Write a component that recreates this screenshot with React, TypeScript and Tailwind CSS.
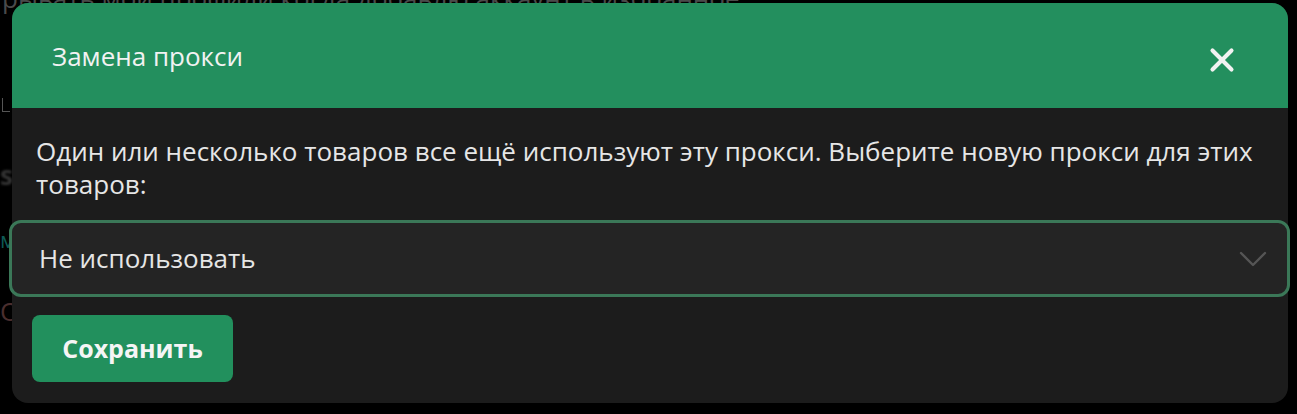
import { X } from 'lucide-react';

export default function App() {
  return (
    <div
      className="relative w-[1297px] h-[414px] overflow-hidden bg-black"
      style={{ fontFamily: '"Open Sans", "Noto Sans", sans-serif' }}
    >
      {/* страница под модалкой */}
      <div className="absolute inset-0 text-[#4a4a4a]">
        <p className="mt-[-15px] ml-[2px] text-[26px] leading-[26px] whitespace-nowrap">
          рывать мои профили когда добавлю аккаунт в избранное
        </p>
        <div className="mt-[87px] ml-[2px] w-[8px] h-[14px] border-l border-b border-[#555]" />
        <p className="mt-[44px] text-[26px] font-bold text-[#333] blur-[1px]">sc</p>
        <p className="mt-[28px] text-[22px] text-[#0e5a55]">м</p>
        <p className="mt-[36px] text-[26px] text-[#4a2e2e]">О</p>
      </div>

      {/* модалка */}
      <div className="absolute left-[12px] top-[3px] w-[1276px] h-[400px] rounded-[16px] bg-[#1c1c1c] flex flex-col">
        <div className="h-[105px] rounded-t-[16px] bg-[#238f5e] flex items-center justify-between pl-[40px] pr-[47px]">
          <h2 className="text-[26px] text-[#f2f2f2] mt-[2px]">Замена прокси</h2>
          <X className="w-[38px] h-[38px] text-[#f2f2f2] mt-[8px]" strokeWidth={2.6} />
        </div>

        <div className="flex flex-col px-[24px] pt-[27px] pb-[21px]">
          <p className="text-[26px] leading-[33px] text-[#e6e6e6]">
            Один или несколько товаров все ещё используют эту прокси. Выберите новую прокси для этих
            товаров:
          </p>

          <div className="mt-[19px] -ml-[27px] -mr-[26px] h-[77px] rounded-[12px] border-[3px] border-[#3b7858] bg-[#242424] flex items-center justify-between pl-[27px] pr-[20px]">
            <span className="text-[26px] text-[#e6e6e6]">Не использовать</span>
            <svg width="28" height="16" viewBox="0 0 28 16" fill="none">
              <polyline points="2,2 14,14 26,2" stroke="#555555" strokeWidth="2.4" strokeLinecap="round" strokeLinejoin="round" />
            </svg>
          </div>

          <button className="mt-[18px] -ml-[4px] w-[201px] h-[67px] rounded-[8px] bg-[#22905d] text-[25px] font-bold text-[#f5f5f5]">
            Сохранить
          </button>
        </div>
      </div>
    </div>
  );
}
